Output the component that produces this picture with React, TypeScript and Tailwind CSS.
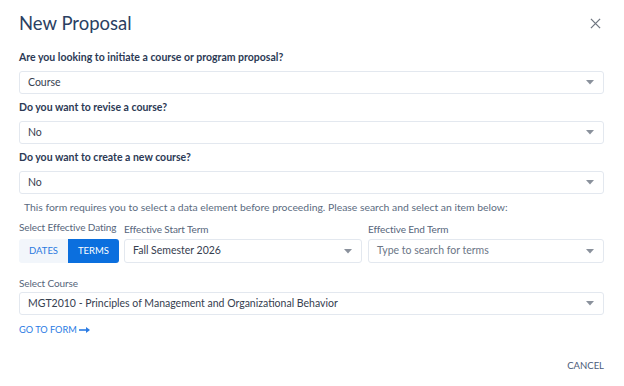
import React from "react";

function Caret() {
  return (
    <svg width="8" height="5" viewBox="0 0 8 5" className="shrink-0">
      <path d="M0 0 L8 0 L4 4.5 Z" fill="#8a919c" />
    </svg>
  );
}

function Select({ value, placeholder, className = "", h = "h-[23px]" }: { value?: string; placeholder?: string; className?: string; h?: string }) {
  return (
    <div className={`flex items-center justify-between ${h} border border-[#e3e8ef] rounded-[3px] bg-white pl-[8px] pr-[9px] ${className}`}>
      <span className={`text-[10.5px] ${value ? "text-[#36404f]" : "text-[#6b7686]"}`}>{value ?? placeholder}</span>
      <Caret />
    </div>
  );
}

function Question({ label, value }: { label: string; value: string }) {
  return (
    <div className="flex flex-col">
      <div className="text-[10.5px] font-bold text-[#2c3a55] leading-[14px] h-[14px]">{label}</div>
      <Select value={value} className="mt-[7px]" />
    </div>
  );
}

export default function App() {
  return (
    <div className="w-[624px] h-[386px] bg-white relative" style={{ fontFamily: "Lato, 'Noto Sans', sans-serif" }}>
      <div className="pl-[19px] pr-[20px] pt-[11px]">
        <div className="flex items-center justify-between h-[24px]">
          <h1 className="text-[18.5px] text-[#2b3f63] leading-[24px]">New Proposal</h1>
          <svg width="11" height="11" viewBox="0 0 12 12" className="mr-[3px]">
            <path d="M1 1 L11 11 M11 1 L1 11" stroke="#6f7680" strokeWidth="1.4" />
          </svg>
        </div>
        <div className="mt-[15px] flex flex-col gap-[6px]">
          <Question label="Are you looking to initiate a course or program proposal?" value="Course" />
          <Question label="Do you want to revise a course?" value="No" />
          <Question label="Do you want to create a new course?" value="No" />
        </div>
        <div className="mt-[6px] pl-[5px] text-[10.4px] text-[#5b6b80] leading-[14px]">
          This form requires you to select a data element before proceeding. Please search and select an item below:
        </div>
        <div className="mt-[6px] flex gap-[5px]">
          <div className="flex flex-col w-[100px]">
            <div className="text-[10px] text-[#56657a] leading-[14px] h-[14px] tracking-[-0.1px]">Select Effective Dating</div>
            <div className="mt-[5px] flex h-[24px] rounded-[3px] overflow-hidden">
              <div className="w-[49px] bg-[#f2f6fb] text-[#2a79e0] text-[9.5px] flex items-center justify-center">DATES</div>
              <div className="w-[51px] bg-[#0b6fde] text-white text-[9.5px] flex items-center justify-center">TERMS</div>
            </div>
          </div>
          <div className="flex flex-col w-[238px]">
            <div className="text-[10px] text-[#56657a] leading-[14px] h-[14px] mt-[2px] tracking-[-0.1px]">Effective Start Term</div>
            <Select value="Fall Semester 2026" className="mt-[3px]" h="h-[24px]" />
          </div>
          <div className="flex flex-col flex-1 ml-[1px]">
            <div className="text-[10px] text-[#56657a] leading-[14px] h-[14px] mt-[2px] tracking-[-0.1px]">Effective End Term</div>
            <Select placeholder="Type to search for terms" className="mt-[3px]" h="h-[24px]" />
          </div>
        </div>
        <div className="mt-[13px] text-[10px] text-[#56657a] leading-[14px] h-[14px] tracking-[-0.1px]">Select Course</div>
        <Select value="MGT2010 - Principles of Management and Organizational Behavior" className="mt-[2px]" />
        <div className="mt-[8px] flex items-center gap-[2px] text-[9.2px] text-[#2a7be4] leading-[14px]">
          <span>GO TO FORM</span>
          <svg width="11" height="6" viewBox="0 0 11 6">
            <path d="M0 3 H8" stroke="#2a7be4" strokeWidth="1.6" />
            <path d="M7 0 L11 3 L7 6 Z" fill="#2a7be4" />
          </svg>
        </div>
        <div className="mt-[22px] flex justify-end text-[9.5px] text-[#4a5a78] leading-[14px]">CANCEL</div>
      </div>
    </div>
  );
}
